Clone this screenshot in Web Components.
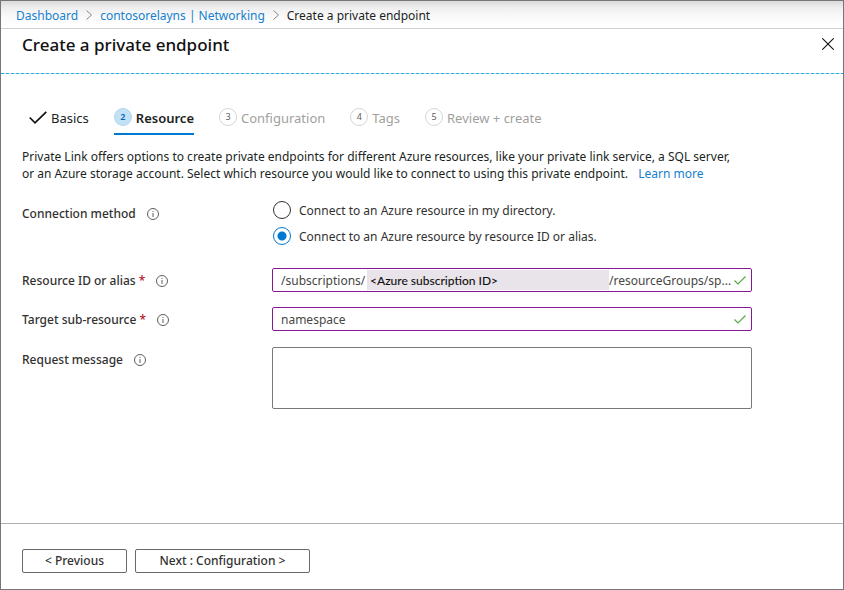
<!DOCTYPE html>
<html lang="en">
<head>
<meta charset="utf-8">
<title>Create a private endpoint</title>
<style>
  body { margin: 0; background: #fff; color: #323130; font: 12px/17px "Noto Sans", "Open Sans", sans-serif; }
</style>
</head>
<body>
<endpoint-page></endpoint-page>

<script>
const define = (name, html, setup) => {
  const template = document.createElement("template");
  template.innerHTML = "<style>*{box-sizing:border-box}</style>" + html;
  customElements.define(name, class extends HTMLElement {
    constructor() {
      super();
      this.attachShadow({ mode: "open" }).append(template.content.cloneNode(true));
    }
    connectedCallback() { if (setup) setup(this, this.shadowRoot); }
  });
};

define("info-tip", `
<style>
  :host { display: inline-flex; }
  button { display: flex; padding: 0; border: 0; background: none; }
  svg { width: 12px; height: 12px; }
</style>
<button type="button" aria-label="More information">
  <svg viewBox="0 0 12 12" fill="none" stroke="#605e5c"><circle cx="6" cy="6" r="5.5"/><path d="M6 5v4M6 3v1"/></svg>
</button>`);

define("valid-mark", `
<style>:host { display: flex; flex: none; } svg { width: 12px; height: 9px; }</style>
<svg viewBox="0 0 12 9" fill="none" stroke="#57a845" stroke-width="1.2"><path d="M.5 4.5 4 8 11.5.5"/></svg>`);

define("crumb-bar", `
<style>
  :host { display: block; border-bottom: 1px solid #d0d0d0; background: linear-gradient(#dadada, #efefef 25%, #fafafa 60%, #fff); }
  nav { display: flex; align-items: center; gap: 8px; height: 27px; padding: 1px 15px 0; color: #201f1e; white-space: nowrap; }
  a { color: #1580cf; text-decoration: none; }
  svg { width: 6px; height: 10px; }
</style>
<nav aria-label="Breadcrumb">
  <a href="#">Dashboard</a>
  <svg viewBox="0 0 6 10" fill="none" stroke="#8a8886"><path d="m.5.5 5 4.5-5 4.5"/></svg>
  <a href="#">contosorelayns | Networking</a>
  <svg viewBox="0 0 6 10" fill="none" stroke="#8a8886"><path d="m.5.5 5 4.5-5 4.5"/></svg>
  <span>Create a private endpoint</span>
</nav>`);

define("blade-title", `
<style>
  :host { display: block; }
  header { display: flex; justify-content: space-between; align-items: flex-start; height: 44px; padding: 4px 9px 0 21px; color: #111; }
  h1 { margin: 0; font-size: 17px; line-height: 24px; font-weight: 500; }
  button { display: flex; margin: 5px 0 0; padding: 0; border: 0; background: none; }
  svg { width: 12px; height: 12px; }
  hr { height: 1px; margin: 0; border: 0; background: repeating-linear-gradient(90deg, #1ab0e8 0 3px, #d0d0d0 3px 5px); }
</style>
<header>
  <h1>Create a private endpoint</h1>
  <button type="button" aria-label="Close"><svg viewBox="0 0 12 12" fill="none" stroke="#111" stroke-width="1.1"><path d="m.3.3 11.4 11.4m0-11.4L.3 11.7"/></svg></button>
</header>
<hr>`);

define("wizard-step", `
<style>
  :host { display: block; }
  button { display: flex; align-items: center; gap: 4px; height: 27px; padding: 0 0 9px; border: 0; background: none; font: inherit; font-size: 13px; color: #a19f9d; white-space: nowrap; }
  .dot { display: grid; place-items: center; width: 18px; height: 18px; border: 1px solid #d8d6d4; border-radius: 50%; color: #605e5c; font-size: 9px; line-height: 16px; }
  .name { padding-top: 2px; }
  svg { display: none; width: 18px; height: 13px; }
  :host([state=done]) button { color: #201f1e; }
  :host([state=done]) .dot { display: none; }
  :host([state=done]) svg { display: block; }
  :host([state=current]) button { color: #201f1e; font-weight: 600; border-bottom: 2px solid #0078d4; padding-bottom: 7px; }
  :host([state=current]) .dot { background: #c3e1f5; border-color: #b2d6f2; color: #0065b3; }
</style>
<button type="button"><svg viewBox="0 0 18 13" fill="none" stroke="#111" stroke-width="1.7"><path d="m.7 6.5 5.3 5.3L17.3.8"/></svg><span class="dot"></span><span class="name"><slot></slot></span></button>`,
(host, root) => { root.querySelector(".dot").textContent = host.getAttribute("number"); });

define("form-row", `
<style>
  :host { display: grid; grid-template-columns: 250px minmax(0, 480px); align-items: start; }
  .label { display: flex; align-items: center; gap: 11px; padding-top: 4px; font-weight: 500; }
</style>
<div class="label"><slot name="label"></slot><info-tip></info-tip></div>
<slot></slot>`);

define("endpoint-form", `
<style>
  :host { display: flex; flex-direction: column; }
  .star { color: #b5152b; }
  label { color: #323130; }
  .choices { display: grid; gap: 8px; }
  .choices label { display: flex; align-items: center; gap: 8px; height: 18px; }
  input[type=radio] { appearance: none; width: 18px; height: 18px; margin: 0 0 0 1px; border: 1px solid #323130; border-radius: 50%; }
  input[type=radio]:checked { border-color: #0078d4; background: radial-gradient(circle, #0078d4 4px, transparent 5px); }
  .field { display: flex; align-items: center; height: 24px; padding: 0 5px 0 8px; border: 1px solid #881798; border-radius: 2px; }
  .field input { min-width: 0; height: 20px; padding: 0; border: 0; outline: 0; background: none; font: inherit; color: #484644; }
  .start { width: 86px; }
  .mask { flex: 1; height: 20px; padding: 2px 0 0 3px; background: #e9e3ea; color: #111; font: 500 12px/17px Lato, "Open Sans", sans-serif; white-space: nowrap; }
  .end { width: 125px; }
  .full { flex: 1; }
  .id { margin-top: 23px; }
  .sub { margin-top: 15px; }
  .msg { margin-top: 16px; }
  textarea { width: 100%; height: 62px; border: 1px solid #7a7876; border-radius: 2px; resize: none; background: none; font: inherit; }
</style>
<form-row>
  <span slot="label" id="method">Connection method</span>
  <div class="choices" role="radiogroup" aria-labelledby="method">
    <label><input type="radio" name="m">Connect to an Azure resource in my directory.</label>
    <label><input type="radio" name="m" checked>Connect to an Azure resource by resource ID or alias.</label>
  </div>
</form-row>
<form-row class="id">
  <label slot="label" for="rid">Resource ID or alias <span class="star">*</span></label>
  <div class="field"><input class="start" id="rid" value="/subscriptions/"><span class="mask">&lt;Azure subscription ID&gt;</span><input class="end" aria-label="Resource path" value="/resourceGroups/sp..."><valid-mark></valid-mark></div>
</form-row>
<form-row class="sub">
  <label slot="label" for="target">Target sub-resource <span class="star">*</span></label>
  <div class="field"><input class="full" id="target" value="namespace"><valid-mark></valid-mark></div>
</form-row>
<form-row class="msg">
  <label slot="label" for="message">Request message</label>
  <textarea id="message"></textarea>
</form-row>`);

define("action-bar", `
<style>
  :host { display: flex; gap: 8px; padding: 25px 21px 16px; border-top: 1px solid #b3b0ad; }
  button { height: 24px; min-width: 105px; padding: 0 20px 2px; border: 1px solid #6b6967; border-radius: 2px; background: #fff; color: #323130; font: inherit; font-weight: 500; white-space: nowrap; }
  .next { min-width: 175px; }
</style>
<button type="button">&lt; Previous</button>
<button type="button" class="next">Next : Configuration &gt;</button>`);

define("endpoint-page", `
<style>
  :host { display: flex; flex-direction: column; min-height: 100vh; border: 1px solid #767676; box-sizing: border-box; }
  main { flex: 1; padding: 34px 21px 24px; }
  .steps { display: flex; gap: 25px; padding-left: 7px; }
  p { max-width: 720px; margin: 13px 0 19px; color: #201f1e; }
  a { margin-left: 4px; color: #1580cf; text-decoration: none; }
</style>
<crumb-bar></crumb-bar>
<blade-title></blade-title>
<main>
  <div class="steps">
    <wizard-step state="done" number="1">Basics</wizard-step>
    <wizard-step state="current" number="2">Resource</wizard-step>
    <wizard-step number="3">Configuration</wizard-step>
    <wizard-step number="4">Tags</wizard-step>
    <wizard-step number="5">Review + create</wizard-step>
  </div>
  <p>Private Link offers options to create private endpoints for different Azure resources, like your private link service, a SQL server, or an Azure storage account. Select which resource you would like to connect to using this private endpoint.&nbsp; <a href="#">Learn more</a></p>
  <endpoint-form></endpoint-form>
</main>
<action-bar></action-bar>`);
</script>
</body>
</html>
